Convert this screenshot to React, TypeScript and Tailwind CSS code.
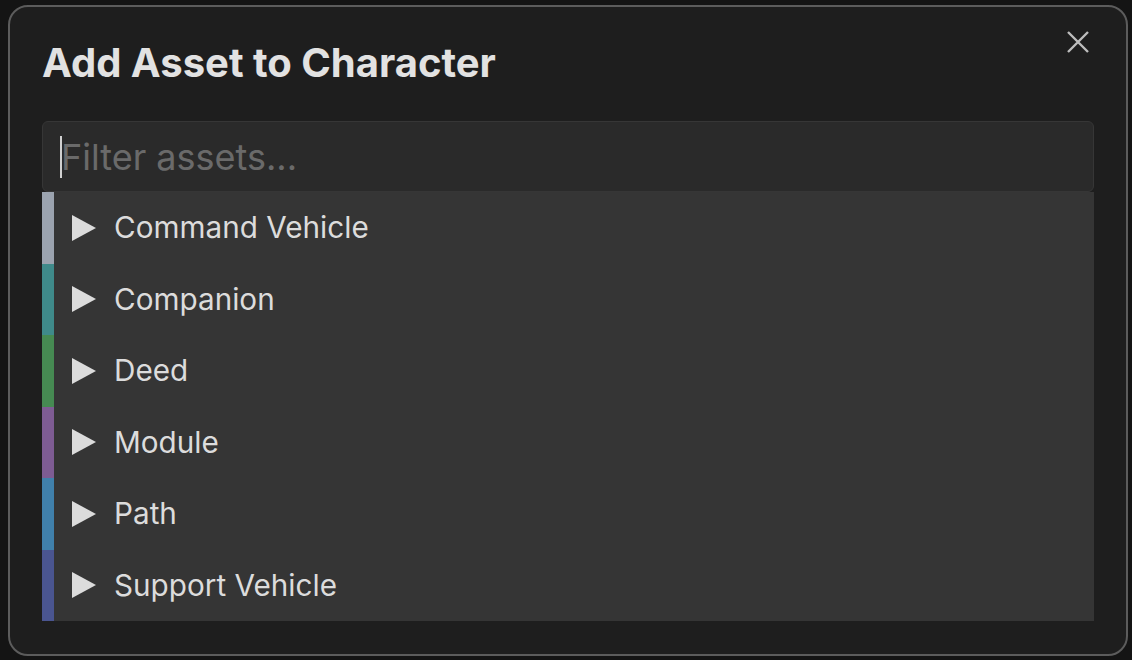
const assetTypes = [
  { name: 'Command Vehicle', color: 'bg-[#9ba3af]' },
  { name: 'Companion', color: 'bg-[#3f8a8a]' },
  { name: 'Deed', color: 'bg-[#468a52]' },
  { name: 'Module', color: 'bg-[#7e5c93]' },
  { name: 'Path', color: 'bg-[#4080ab]' },
  { name: 'Support Vehicle', color: 'bg-[#4a5590]' },
]

export default function App() {
  return (
    <div className="h-[660px] w-[1132px] overflow-hidden bg-[#141414] pl-[8px] pt-[5px] font-['Inter',sans-serif]">
      <div className="relative flex h-[651px] w-[1120px] flex-col rounded-[20px] border-2 border-[#5c5c5c] bg-[#1e1e1e] px-8 pt-[36px]">
        {/* 닫기 버튼 */}
        <button className="absolute right-[36px] top-[23px] text-[#bdbdbd]">
          <svg className="h-[24px] w-[24px]" viewBox="0 0 24 24" fill="none" stroke="currentColor" strokeWidth={2.4}>
            <path d="M2 2L22 22M22 2L2 22" />
          </svg>
        </button>

        <h2 className="text-[40px] font-bold leading-[40px] text-[#e2e2e2]">Add Asset to Character</h2>

        {/* 검색 입력 */}
        <div className="mt-[38px] flex h-[71px] items-center rounded-[6px] border border-[#363636] bg-[#2a2a2a] px-[17px]">
          <span className="h-[42px] w-[2px] bg-[#d0d0d0]" />
          <span className="-ml-[1px] text-[36px] text-[#6a6a6a]">Filter assets...</span>
        </div>

        {/* 자산 종류 목록 */}
        <div className="flex flex-col bg-[#353535]">
          {assetTypes.map((t) => (
            <div key={t.name} className="flex h-[71.5px] items-center">
              <div className={`h-full w-[12px] ${t.color}`} />
              <svg className="ml-[18px] h-[26px] w-[24px]" viewBox="0 0 24 26">
                <polygon points="0,0 24,13 0,26" fill="#dcdcdc" />
              </svg>
              <span className="ml-[18px] text-[29.7px] text-[#dcdcdc]">{t.name}</span>
            </div>
          ))}
        </div>
      </div>
    </div>
  )
}
